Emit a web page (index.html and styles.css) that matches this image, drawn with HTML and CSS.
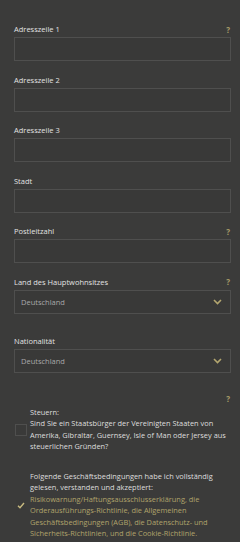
FILE: index.html
```html
<!DOCTYPE html>
<html lang="de">
<head>
    <meta charset="UTF-8">
    <meta name="viewport" content="width=device-width, initial-scale=1.0">
    <title>Adresse</title>
    <link rel="stylesheet" href="styles.css">
</head>
<body>

    <!-- Address form -->
    <form class="reg-form">
        <div class="field">
            <div class="field-label">Adresszeile 1 <span class="help">?</span></div>
            <input type="text" class="text-input">
        </div>
        <div class="field">
            <div class="field-label">Adresszeile 2</div>
            <input type="text" class="text-input">
        </div>
        <div class="field">
            <div class="field-label">Adresszeile 3</div>
            <input type="text" class="text-input">
        </div>
        <div class="field">
            <div class="field-label">Stadt</div>
            <input type="text" class="text-input">
        </div>
        <div class="field">
            <div class="field-label">Postleitzahl <span class="help">?</span></div>
            <input type="text" class="text-input">
        </div>

        <div class="field field-select">
            <div class="field-label">Land des Hauptwohnsitzes <span class="help">?</span></div>
            <div class="select-box">
                <span>Deutschland</span>
                <svg class="chevron" width="9" height="6" viewBox="0 0 9 6"><path d="M1 1 L4.5 4.5 L8 1" fill="none" stroke="#b3a66f" stroke-width="1.6"/></svg>
            </div>
        </div>
        <div class="field field-select">
            <div class="field-label">Nationalität</div>
            <div class="select-box">
                <span>Deutschland</span>
                <svg class="chevron" width="9" height="6" viewBox="0 0 9 6"><path d="M1 1 L4.5 4.5 L8 1" fill="none" stroke="#b3a66f" stroke-width="1.6"/></svg>
            </div>
        </div>

        <!-- Checkboxes -->
        <div class="check-row tax-row">
            <span class="help help-corner">?</span>
            <span class="check-box"></span>
            <div class="check-text">
                Steuern:<br>
                Sind Sie ein Staatsbürger der Vereinigten Staaten von Amerika, Gibraltar, Guernsey, Isle of Man oder Jersey aus steuerlichen Gründen?
            </div>
        </div>
        <div class="check-row terms-row">
            <span class="check-box checked">
                <svg width="8" height="7" viewBox="0 0 8 7"><path d="M1 3.8 L3 5.8 L7 1" fill="none" stroke="#c9bb80" stroke-width="1.4"/></svg>
            </span>
            <div class="check-text">
                Folgende Geschäftsbedingungen habe ich vollständig gelesen, verstanden und akzeptiert:
                <span class="gold">Risikowarnung/Haftungsausschlusserklärung, die Orderausführungs-Richtlinie, die Allgemeinen Geschäftsbedingungen (AGB), die Datenschutz- und Sicherheits-Richtlinien, und die Cookie-Richtlinie.</span>
            </div>
        </div>
    </form>

</body>
</html>
```

FILE: styles.css
```css
/* Page */
body {
    margin: 0;
    padding: 0;
    background-color: #3b3b3a;
    font-family: 'Open Sans', sans-serif;
    color: #dcdcdc;
}

.reg-form {
    padding: 23px 9px 0 14px;
}

/* Fields */
.field {
    margin-bottom: 12.6px;
}

.field-select {
    margin-bottom: 21.5px;
}

.field-label {
    display: flex;
    justify-content: space-between;
    align-items: center;
    height: 12px;
    margin-bottom: 2px;
    font-size: 7.5px;
    color: #e2e2e2;
}

.help {
    font-weight: bold;
    font-size: 8px;
    color: #a89d68;
    padding-right: 1px;
}

.text-input {
    display: block;
    box-sizing: border-box;
    width: 100%;
    height: 24px;
    margin: 0;
    border: 1px solid #4f4f4e;
    background-color: #393938;
    outline: none;
}

.select-box {
    display: flex;
    justify-content: space-between;
    align-items: center;
    box-sizing: border-box;
    height: 24px;
    padding: 0 8px 0 6px;
    border: 1px solid #4f4f4e;
    background-color: #393938;
    font-size: 7.5px;
    color: #a8a8a8;
}

/* Checkbox rows */
.check-row {
    position: relative;
    display: flex;
    align-items: center;
    font-size: 7.4px;
    line-height: 11.5px;
}

.tax-row {
    padding-top: 12px;
    margin-bottom: 18px;
}

.check-box {
    flex: none;
    display: flex;
    justify-content: center;
    align-items: center;
    box-sizing: border-box;
    width: 12px;
    height: 12px;
    margin: 0 3px 0 1px;
    border: 1px solid #4f4f4e;
    background-color: #3a3a39;
}

.check-box.checked {
    border-color: #3b3b3a;
}

.check-text {
    color: #dedede;
}

.gold {
    color: #b0a36b;
}

.help-corner {
    position: absolute;
    top: -2px;
    right: 0;
}
```
